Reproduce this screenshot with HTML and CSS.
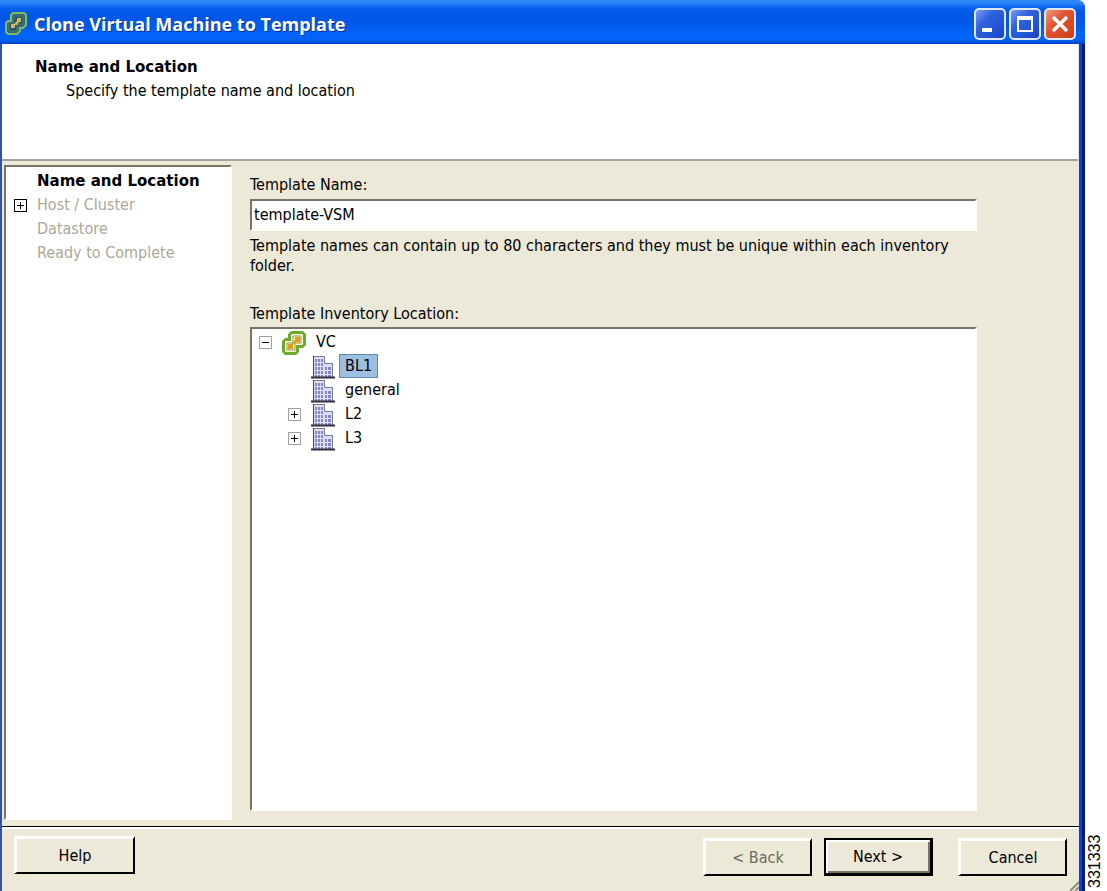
FILE: index.html
```html
<!DOCTYPE html>
<html lang="en">
<head>
<meta charset="utf-8">
<title>Clone Virtual Machine to Template</title>
<link rel="stylesheet" href="styles.css">
</head>
<body>
<svg width="0" height="0" class="defs" aria-hidden="true">
  <defs>
    <symbol id="squares" viewBox="0 0 24 24">
      <path d="M9 0h12l3 3v11l-3 3h-4v4l-3 3H3l-3-3V10l3-3h3V3z" fill="#6cab2c"/>
      <path d="M10 3h10l1 1v9l-1 1h-6v6l-1 1H4l-1-1v-9l1-1h5V4z" fill="#fbfbe2"/>
      <path d="M11 5h8v7h-6v7H5v-7h6z" fill="#fffdf0" stroke="#8c9a24"/>
      <path d="M13 6h5v5h-5zM6 13h5v5H6z" fill="#dc9f22"/>
      <path d="M10 12l3-3v3l-2 2z" fill="#dc9f22"/>
    </symbol>
    <symbol id="building" viewBox="0 0 24 24">
      <path d="M2 1h12v7h8v14H2z" fill="#dedef4"/>
      <path d="M4 4h2v3H4zM7 4h2v3H7zM10 4h2v3h-2zM4 8h2v3H4zM7 8h2v3H7zM10 8h2v3h-2zM4 12h2v3H4zM7 12h2v3H7zM10 12h2v3h-2zM14 12h2v3h-2zM17 12h3v3h-3zM4 16h2v3H4zM7 16h2v3H7zM10 16h2v3h-2zM14 16h2v3h-2zM17 16h3v3h-3zM4 20h2v2H4zM7 20h2v2H7zM10 20h2v2h-2zM14 20h2v2h-2zM17 20h3v2h-3z" fill="#8886ca"/>
      <path d="M2.500 22V1.500h11v7h8V22" fill="none" stroke="#77778e"/>
      <path d="M2.500 22V1" stroke="#44445a"/>
      <path d="M0 22.500h24" stroke="#30303c" stroke-width="2"/>
    </symbol>
  </defs>
</svg>
<div class="page">
  <main class="window">
    <header class="titlebar">
      <svg class="app-icon" viewBox="0 0 24 24" aria-hidden="true">
        <path d="M9 1h11l2 2v10l-3 3h-3v3l-3 3H4l-2-2v-9l2-2h3V3z" fill="#2d6676" stroke="#7fbb62" stroke-width="2"/>
        <path d="M10 4h9v8h-6v7H5v-8h5z" fill="#24506e" stroke="#4f8060"/>
        <path d="M13 6h4v4h-2l-2 3h-2v3H7v-4h3l3-3z" fill="#dfb45c"/>
      </svg>
      <h1 class="title">Clone Virtual Machine to Template</h1>
      <div class="controls">
        <button class="control" type="button" aria-label="Minimize"><svg viewBox="0 0 28 28"><path d="M6 18h10v4H6z" fill="#fff"/></svg></button>
        <button class="control" type="button" aria-label="Maximize"><svg viewBox="0 0 28 28"><path d="M7 7h14v14H7z" fill="none" stroke="#fff" stroke-width="2"/><path d="M6 6h16v4H6z" fill="#fff"/></svg></button>
        <button class="control close" type="button" aria-label="Close"><svg viewBox="0 0 28 28"><path d="M7 7l14 14M21 7l-14 14" stroke="#fff" stroke-width="3.500"/></svg></button>
      </div>
    </header>
    <section class="intro">
      <h2 class="intro-title">Name and Location</h2>
      <p class="intro-text">Specify the template name and location</p>
    </section>
    <div class="content">
      <nav class="steps" aria-label="Steps">
        <ul class="list">
          <li class="step current">Name and Location</li>
          <li class="step"><button class="toggle dark" type="button" aria-label="Expand Host / Cluster"><svg viewBox="0 0 13 13"><path d="M3 6.500h7M6.500 3v7" stroke="#000"/></svg></button>Host / Cluster</li>
          <li class="step">Datastore</li>
          <li class="step">Ready to Complete</li>
        </ul>
      </nav>
      <form class="form">
        <label class="label" for="name">Template Name:</label>
        <input class="name" id="name" type="text" value="template-VSM">
        <p class="hint">Template names can contain up to 80 characters and they must be unique within each inventory folder.</p>
        <p class="label" id="tree-label">Template Inventory Location:</p>
        <div class="tree" role="tree" aria-labelledby="tree-label">
          <div class="node root" role="treeitem"><button class="toggle" type="button" aria-label="Collapse VC"><svg viewBox="0 0 13 13"><path d="M3 6.500h7" stroke="#000"/></svg></button><svg class="icon"><use href="#squares"/></svg><span class="node-name">VC</span></div>
          <div class="node" role="treeitem"><span class="spacer"></span><svg class="icon"><use href="#building"/></svg><span class="node-name selected">BL1</span></div>
          <div class="node" role="treeitem"><span class="spacer"></span><svg class="icon"><use href="#building"/></svg><span class="node-name">general</span></div>
          <div class="node" role="treeitem"><button class="toggle" type="button" aria-label="Expand L2"><svg viewBox="0 0 13 13"><path d="M3 6.500h7M6.500 3v7" stroke="#000"/></svg></button><svg class="icon"><use href="#building"/></svg><span class="node-name">L2</span></div>
          <div class="node" role="treeitem"><button class="toggle" type="button" aria-label="Expand L3"><svg viewBox="0 0 13 13"><path d="M3 6.500h7M6.500 3v7" stroke="#000"/></svg></button><svg class="icon"><use href="#building"/></svg><span class="node-name">L3</span></div>
        </div>
      </form>
    </div>
    <footer class="footer">
      <button class="button help" type="button">Help</button>
      <button class="button back" type="button" disabled>&lt; Back</button>
      <button class="button next" type="button">Next &gt;</button>
      <button class="button cancel" type="button">Cancel</button>
      <svg class="grip" viewBox="0 0 10 10" aria-hidden="true"><path d="M1 10l9-9M6 10l4-4" stroke="#8f8d80" stroke-width="2"/></svg>
    </footer>
  </main>
  <aside class="figure-id">331333</aside>
</div>
</body>
</html>
```
FILE: styles.css
```css
* { box-sizing: border-box; }
body {
  margin: 0;
  background: #fff;
  color: #000;
  font: 16px/20px "DejaVu Sans Condensed", "DejaVu Sans", sans-serif;
}
h1, h2, p { margin: 0; }
button, input { font: inherit; color: inherit; }
.defs { position: absolute; }
.page { display: flex; min-height: 100vh; }
.window {
  flex: 1;
  display: flex;
  flex-direction: column;
  padding: 0 6px 0 2px;
  border-top-right-radius: 8px;
  background:
    linear-gradient(90deg, #0b45c8 3px, #001a8c 3px) right / 6px 100% no-repeat,
    linear-gradient(90deg, #2a55a8 2px, #ece9d8 2px);
}
.titlebar {
  display: flex;
  align-items: center;
  gap: 6px;
  height: 44px;
  margin: 0 -6px 0 -2px;
  padding: 4px 9px 0 4px;
  border-top-right-radius: 8px;
  background: linear-gradient(#2a85f5 0, #2a85f5 3px, #0560ee 8px, #0057e5 14px, #0058ec 24px, #0464fb 36px, #0460f4 40px, #0340c4 44px);
}
.app-icon { width: 24px; height: 24px; }
.title {
  flex: 1;
  color: #fff;
  font: bold 18px/24px "Open Sans", sans-serif;
  text-shadow: 1px 1px #0a2f88;
}
.controls { display: flex; gap: 3px; }
.control {
  width: 32px;
  height: 32px;
  padding: 0;
  border: 2px solid #dce9fb;
  border-radius: 5px;
  background: linear-gradient(135deg, #7d9cf0, #2f62de 35%, #1f4fd0 80%, #1b3fb4);
}
.control svg { display: block; }
.close { background: linear-gradient(135deg, #ee9a80, #e2532f 40%, #cc4018); }
.intro {
  height: 117px;
  padding: 13px 33px;
  background: #fff;
  border-bottom: 2px solid #a5a49c;
  margin-right: 1px;
}
.intro-title { font: bold 15px/20px "DejaVu Sans", sans-serif; }
.intro-text { padding: 4px 31px; }
.content { flex: 1; display: flex; padding: 4px 0 6px 2px; border-bottom: 1px solid #000; }
.steps {
  width: 228px;
  background: #fff;
  border: 2px solid;
  border-color: #77756a #fff #fff #77756a;
}
.list { margin: 0; padding: 2px 0; list-style: none; }
.step {
  position: relative;
  padding-left: 31px;
  line-height: 24px;
  color: #aca899;
}
.current { color: #000; font: bold 15px/24px "DejaVu Sans", sans-serif; }
.toggle {
  flex: none;
  width: 13px;
  height: 13px;
  padding: 0;
  border: 1px solid #a0a0a0;
  background: #fff;
}
.toggle svg { display: block; width: 13px; height: 13px; margin: -1px; }
.dark { position: absolute; left: 8px; top: 6px; border-color: #000; }
.form {
  flex: 1;
  display: flex;
  flex-direction: column;
  padding: 10px 102px 9px 18px;
}
.label { line-height: 20px; }
.name {
  height: 32px;
  margin: 4px 0 5px;
  padding: 0 2px 2px;
  border: 2px solid;
  border-color: #77756a #fff #fff #77756a;
  background: #fff;
}
.hint { margin-bottom: 28px; padding-right: 8px; }
.tree {
  flex: 1;
  margin-top: 3px;
  padding-top: 1px;
  background: #fff;
  border: 2px solid;
  border-color: #77756a #fff #fff #77756a;
}
.node { display: flex; align-items: center; height: 24px; padding-left: 36px; }
.root { padding-left: 7px; }
.icon { flex: none; width: 24px; height: 24px; margin: 1px 4px 0 10px; }
.spacer { width: 13px; }
.node-name { padding: 0 5px; line-height: 22px; border: 1px solid transparent; }
.selected { background: #9dbfe2; border-color: #5f86ad; }
.footer {
  position: relative;
  display: flex;
  align-items: flex-start;
  height: 64px;
  padding: 9px 12px;
  border-top: 2px solid #fff;
}
.button {
  width: 109px;
  height: 38px;
  padding: 0;
  border: solid;
  border-width: 3px 2px 2px 3px;
  border-color: #fff #000 #000 #fff;
  background: #ece9d8;
}
.help { width: 121px; margin: -2px auto 0 0; }
.back { color: #6c6a5e; }
.next { margin: 0 25px 0 12px; border: 2px solid #000; border-width: 2px 3px 3px 2px; box-shadow: inset 2px 2px #fff, inset -2px -2px #77756a; }
.grip { position: absolute; right: 0; bottom: 0; width: 10px; height: 10px; }
.figure-id {
  width: 22px;
  padding: 3px 0 0 1px;
  writing-mode: vertical-rl;
  transform: rotate(180deg);
  font: 16px/20px "Liberation Sans", Arial, sans-serif;
}
```
